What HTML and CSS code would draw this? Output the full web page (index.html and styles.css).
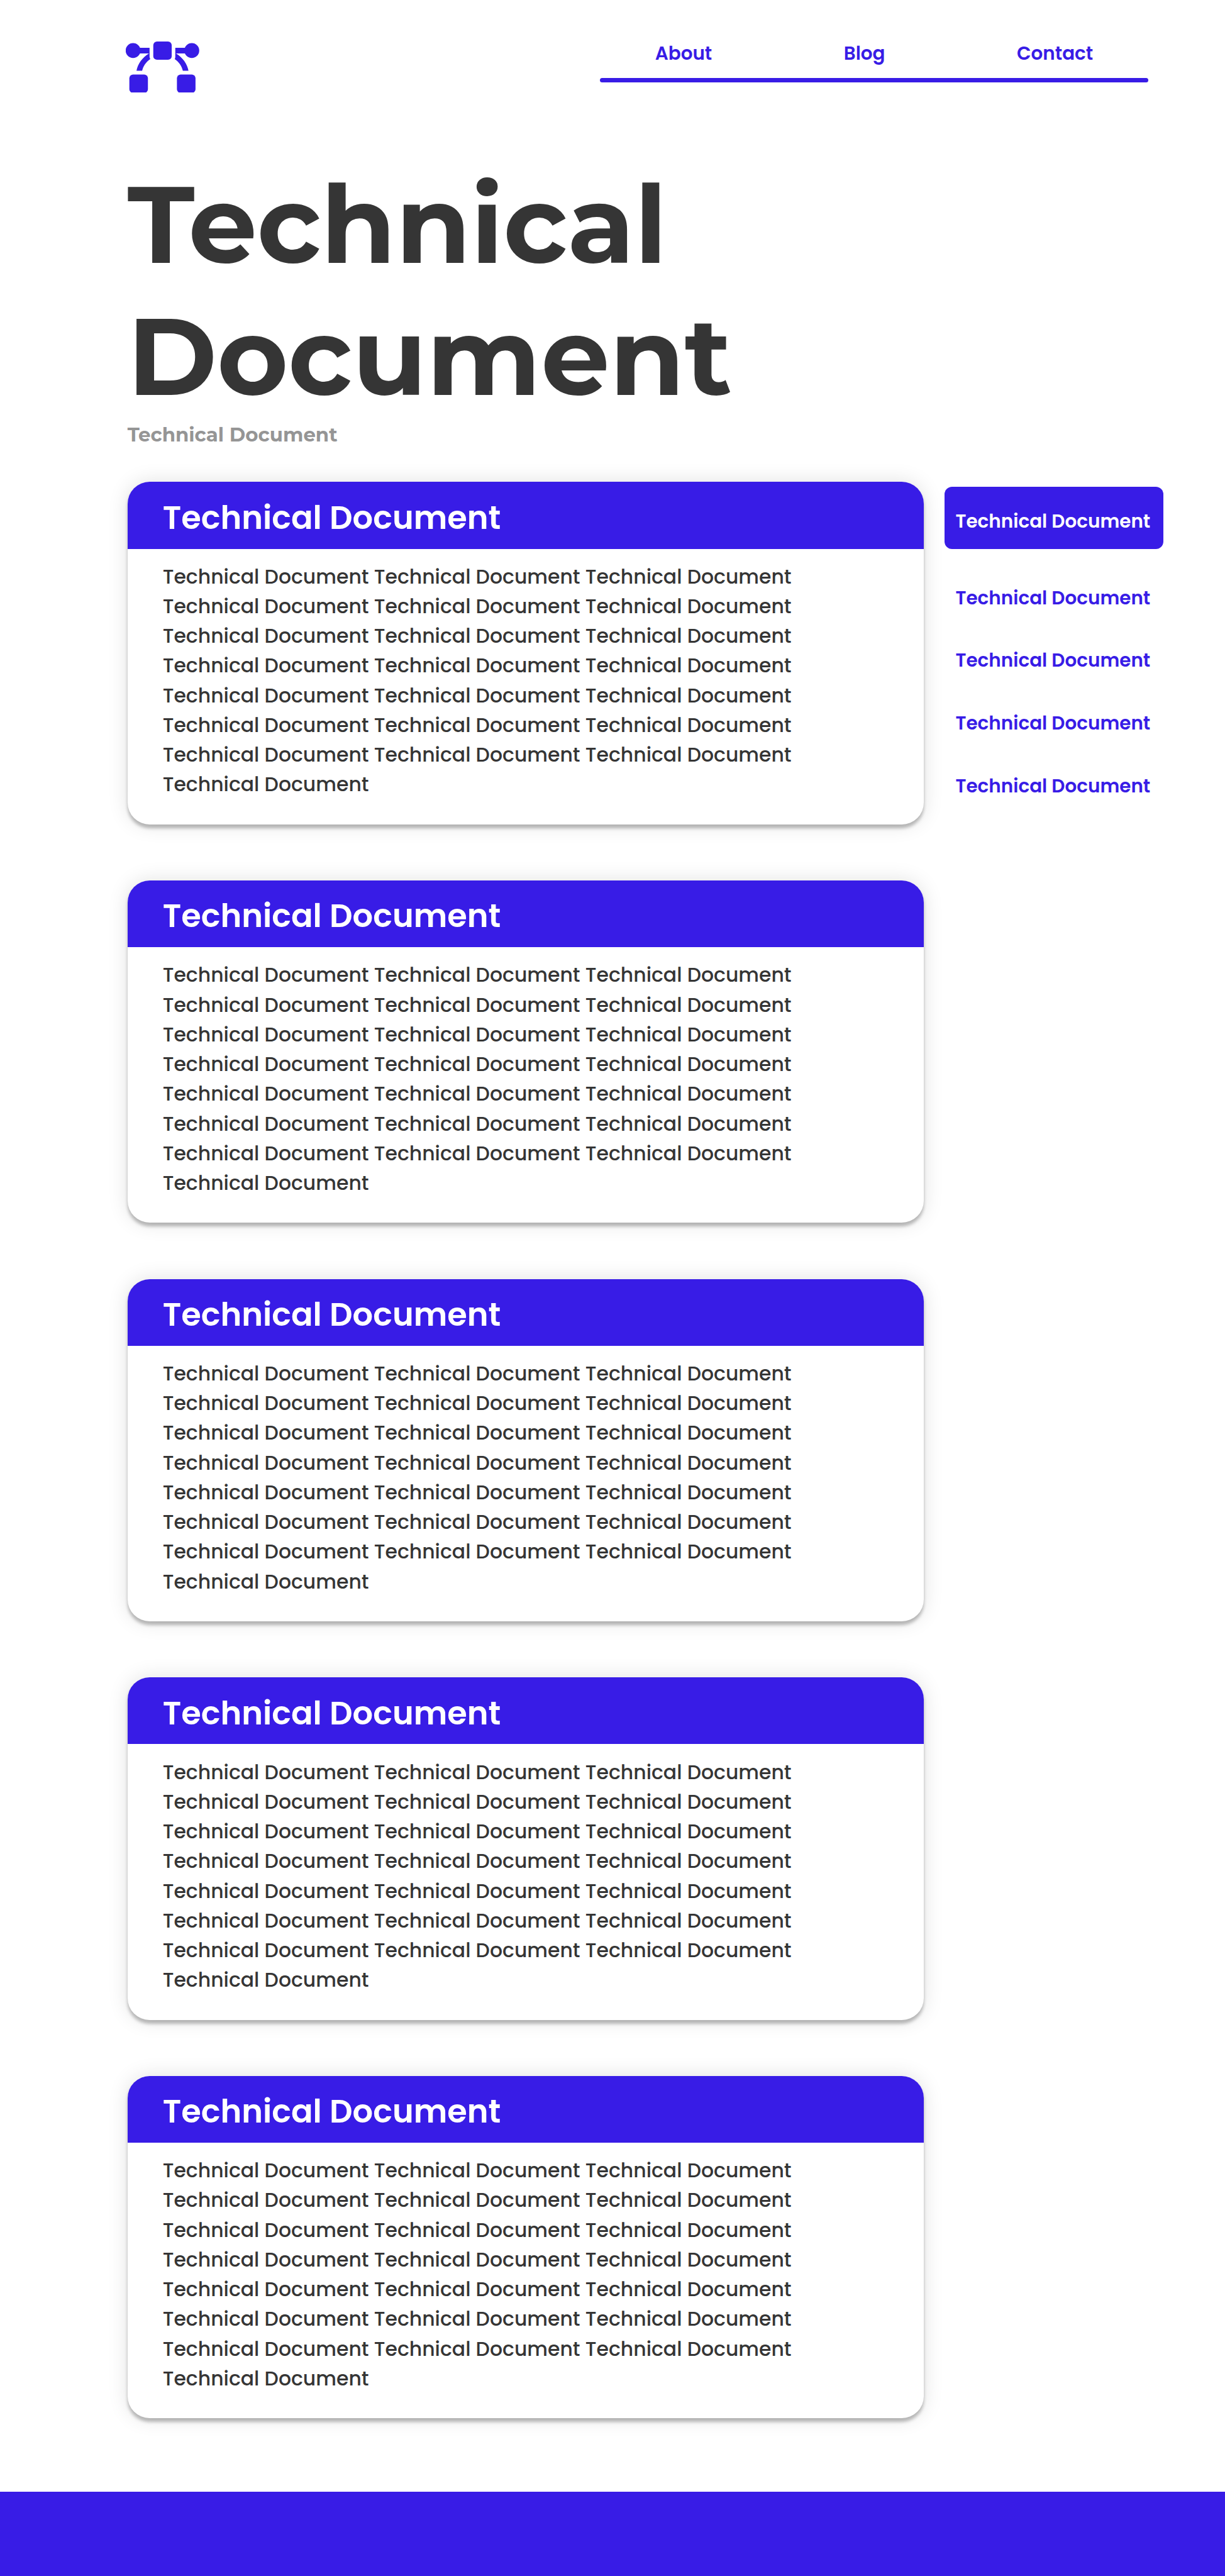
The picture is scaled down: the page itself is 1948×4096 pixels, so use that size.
FILE: index.html
```html
<!DOCTYPE html>
<html lang="en">
<head>
<meta charset="utf-8">
<title>Technical Document</title>
<link rel="stylesheet" href="styles.css">
</head>
<body>
<header class="top">
  <svg class="logo" viewBox="45 60 534 374" aria-hidden="true">
    <circle cx="98" cy="126" r="54"/>
    <circle cx="525" cy="126" r="54"/>
    <rect x="245" y="60" width="134" height="133" rx="27"/>
    <rect x="71" y="300" width="135" height="134" rx="27"/>
    <rect x="417" y="300" width="135" height="134" rx="27"/>
    <path d="M130 106H218V172Q219 181 223 188C192 208 171 240 164 273H123C132 222 165 177 214 147H130Z"/>
    <path d="M494 106H405V172Q405 181 401 188C432 208 453 240 460 273H501C492 222 459 177 410 147H494Z"/>
  </svg>
  <nav class="nav">
    <div class="nav-links"><a>About</a><a>Blog</a><a>Contact</a></div>
    <div class="nav-bar"></div>
  </nav>
</header>
<h1 class="title">Technical<br>Document</h1>
<p class="subtitle">Technical Document</p>
<div class="layout">
  <main class="cards">
    <section class="card">
      <h2 class="card-head">Technical Document</h2>
      <p class="card-body">Technical Document Technical Document Technical Document Technical Document Technical Document Technical Document Technical Document Technical Document Technical Document Technical Document Technical Document Technical Document Technical Document Technical Document Technical Document Technical Document Technical Document Technical Document Technical Document Technical Document Technical Document Technical Document</p>
    </section>
    <section class="card">
      <h2 class="card-head">Technical Document</h2>
      <p class="card-body">Technical Document Technical Document Technical Document Technical Document Technical Document Technical Document Technical Document Technical Document Technical Document Technical Document Technical Document Technical Document Technical Document Technical Document Technical Document Technical Document Technical Document Technical Document Technical Document Technical Document Technical Document Technical Document</p>
    </section>
    <section class="card">
      <h2 class="card-head">Technical Document</h2>
      <p class="card-body">Technical Document Technical Document Technical Document Technical Document Technical Document Technical Document Technical Document Technical Document Technical Document Technical Document Technical Document Technical Document Technical Document Technical Document Technical Document Technical Document Technical Document Technical Document Technical Document Technical Document Technical Document Technical Document</p>
    </section>
    <section class="card">
      <h2 class="card-head">Technical Document</h2>
      <p class="card-body">Technical Document Technical Document Technical Document Technical Document Technical Document Technical Document Technical Document Technical Document Technical Document Technical Document Technical Document Technical Document Technical Document Technical Document Technical Document Technical Document Technical Document Technical Document Technical Document Technical Document Technical Document Technical Document</p>
    </section>
    <section class="card">
      <h2 class="card-head">Technical Document</h2>
      <p class="card-body">Technical Document Technical Document Technical Document Technical Document Technical Document Technical Document Technical Document Technical Document Technical Document Technical Document Technical Document Technical Document Technical Document Technical Document Technical Document Technical Document Technical Document Technical Document Technical Document Technical Document Technical Document Technical Document</p>
    </section>
  </main>
  <aside class="side">
    <a class="side-link active">Technical Document</a>
    <a class="side-link">Technical Document</a>
    <a class="side-link">Technical Document</a>
    <a class="side-link">Technical Document</a>
    <a class="side-link">Technical Document</a>
  </aside>
</div>
<footer class="footer"></footer>
</body>
</html>
```
FILE: styles.css
```css
* { box-sizing: border-box; }

body {
  display: flex;
  flex-direction: column;
  margin: 0;
  width: 1948px;
  height: 4096px;
  background: #fff;
  color: #353535;
  font-family: "Poppins", "Inter", sans-serif;
}

.top {
  display: flex;
  flex: none;
  justify-content: space-between;
  align-items: flex-start;
  height: 250.7px;
  padding: 64.7px 122.3px 0 200px;
}

.logo {
  width: 116.8px;
  height: 81.8px;
  margin-top: 0.9px;
  fill: #381ce6;
}

.nav { width: 872px; }

.nav-links {
  display: flex;
  justify-content: space-between;
  padding: 0 87.5px 0 88px;
  font-size: 29.4px;
  font-weight: 600;
  line-height: 40px;
  color: #381ce6;
}

.nav-bar {
  height: 7.2px;
  margin-top: 19.3px;
  border-radius: 4px;
  background: #381ce6;
}

.title,
.subtitle {
  margin: 0 0 0 202.7px;
  font-family: "Montserrat", "Inter", sans-serif;
  font-weight: 700;
}

.title {
  font-size: 172.6px;
  line-height: 210.5px;
}

.subtitle {
  margin-top: 1.5px;
  font-size: 30.85px;
  line-height: 36px;
  color: #959595;
}

.layout {
  display: flex;
  gap: 32.9px;
  padding: 57.2px 0 0 202.7px;
}

.cards {
  display: flex;
  flex-direction: column;
  gap: 89.2px;
  padding-bottom: 116.6px;
}

.card {
  width: 1266.5px;
  height: 544.45px;
  border-radius: 35px;
  overflow: hidden;
  background: #fff;
  box-shadow: 0 5.2px 5.2px rgba(0, 0, 0, 0.25), 0 0 33px rgba(0, 0, 0, 0.12);
}

.card-head {
  height: 106.2px;
  margin: 0;
  padding: 26.4px 56px 0;
  background: #381ce6;
  color: #fff;
  font-size: 51.1px;
  font-weight: 600;
  line-height: 60px;
}

.card-body {
  margin: 0;
  padding: 21.2px 56px 0;
  font-size: 31.48px;
  font-weight: 500;
  line-height: 47.23px;
}

.side {
  display: flex;
  flex-direction: column;
  width: 348.2px;
  padding-top: 7.2px;
}

.side-link {
  padding-left: 17.4px;
  font-size: 29.45px;
  font-weight: 600;
  line-height: 99.7px;
  color: #381ce6;
}

.side-link.active {
  height: 99px;
  margin-bottom: 28.2px;
  padding-top: 35.2px;
  border-radius: 12px;
  line-height: 40px;
  background: #381ce6;
  color: #fff;
}

.footer {
  flex: 1;
  background: #381ce6;
}
```
